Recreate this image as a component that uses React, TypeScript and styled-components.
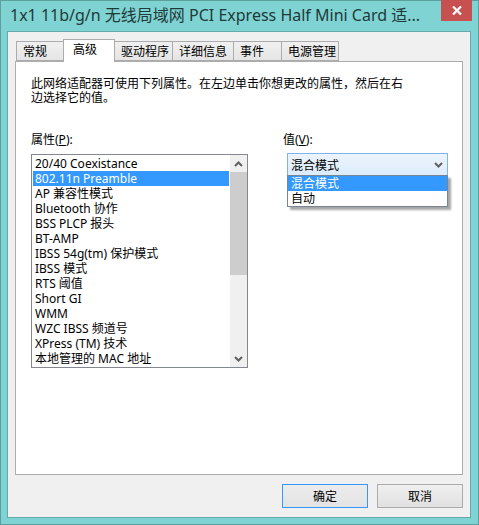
import React from 'react';
import styled, { createGlobalStyle } from 'styled-components';

const GlobalStyle = createGlobalStyle`
  html, body {
    margin: 0;
    padding: 0;
    background: #7fd3d3;
  }
  body {
    font-family: "Noto Sans", "Noto Sans CJK SC", sans-serif;
    font-size: 12px;
    color: #000;
  }
  * {
    box-sizing: border-box;
  }
`;

const Window = styled.div`
  width: 479px;
  height: 525px;
  display: flex;
  flex-direction: column;
  background: #7fd3d3;
  border: 1px solid #5c9f9f;
`;

const TitleBar = styled.div`
  height: 30px;
  display: flex;
  align-items: flex-start;
  padding-left: 9px;
`;

const TitleText = styled.div`
  flex: 1;
  margin-top: 3px;
  font-size: 16px;
  line-height: 22px;
  color: #1f3a3a;
  white-space: nowrap;
  overflow: hidden;
`;

const CloseButton = styled.div`
  width: 31px;
  height: 21px;
  margin-top: -1px;
  margin-right: 6px;
  background: #c75050;
  display: flex;
  align-items: center;
  justify-content: center;
`;

const Client = styled.div`
  flex: 1;
  margin: 0 7px 6px 6px;
  background: #f0f0f0;
  border: 1px solid #65aaaa;
  padding: 7px 7px 9px 7px;
  display: flex;
  flex-direction: column;
`;

const TabStrip = styled.div`
  height: 22px;
  display: flex;
  align-items: flex-end;
  padding-left: 1px;
`;

const Tab = styled.div<{ $w: number; $active?: boolean }>`
  width: ${({ $w }) => $w}px;
  height: ${({ $active }) => ($active ? 23 : 20)}px;
  margin-bottom: ${({ $active }) => ($active ? -1 : 0)}px;
  margin-left: -1px;
  position: relative;
  z-index: ${({ $active }) => ($active ? 2 : 1)};
  border: 1px solid #acacac;
  border-bottom: ${({ $active }) => ($active ? 'none' : '1px solid #acacac')};
  background: ${({ $active }) =>
    $active ? '#ffffff' : 'linear-gradient(#f0f0f0, #e5e5e5)'};
  padding-left: ${({ $active }) => ($active ? 9 : 6)}px;
  line-height: ${({ $active }) => ($active ? 19 : 20)}px;
  white-space: nowrap;
  &:first-child {
    margin-left: 0;
  }
`;

const Panel = styled.div`
  flex: 1;
  background: #fff;
  border: 1px solid #adadad;
  padding: 15px 15px 0 15px;
  display: flex;
  flex-direction: column;
`;

const Description = styled.p`
  margin: 0;
  line-height: 14px;
`;

const Fields = styled.div`
  margin-top: 28px;
  display: grid;
  grid-template-columns: 217px 165px;
  column-gap: 35px;
`;

const Field = styled.div`
  display: flex;
  flex-direction: column;
`;

const FieldLabel = styled.div`
  line-height: 14px;
  height: 14px;
  u {
    text-decoration: underline;
  }
`;

const ListBox = styled.div`
  margin-top: 7px;
  height: 214px;
  border: 1px solid #828790;
  display: flex;
`;

const Items = styled.div`
  flex: 1;
  padding: 1px;
`;

const Item = styled.div<{ $selected?: boolean }>`
  height: 15px;
  line-height: 15px;
  padding-left: 2px;
  white-space: nowrap;
  background: ${({ $selected }) => ($selected ? '#3399ff' : 'transparent')};
  color: ${({ $selected }) => ($selected ? '#fff' : '#000')};
`;

const ScrollBar = styled.div`
  width: 17px;
  display: flex;
  flex-direction: column;
  background: #f0f0f0;
`;

const ScrollArrow = styled.div`
  height: 17px;
  display: flex;
  align-items: center;
  justify-content: center;
`;

const ScrollThumb = styled.div`
  height: 103px;
  background: #cdcdcd;
`;

const ScrollTrack = styled.div`
  flex: 1;
`;

const Combo = styled.div`
  position: relative;
  margin-top: 6px;
  margin-left: 4px;
  width: 161px;
  height: 23px;
  border: 1px solid #7eb4ea;
  background: linear-gradient(#ecf4fc, #dcecfc);
  display: flex;
  align-items: center;
  justify-content: space-between;
  padding: 0 4px 0 3px;
`;

const DropList = styled.div`
  position: absolute;
  left: -1px;
  right: -1px;
  top: 100%;
  background: #fff;
  border: 1px solid #7a8594;
  box-shadow: 3px 3px 2px rgba(0, 0, 0, 0.35);
  z-index: 5;
`;

const DropItem = styled.div<{ $selected?: boolean }>`
  height: 15px;
  line-height: 15px;
  padding-left: 3px;
  background: ${({ $selected }) => ($selected ? '#3399ff' : '#fff')};
  color: ${({ $selected }) => ($selected ? '#fff' : '#000')};
`;

const ButtonRow = styled.div`
  margin-top: 9px;
  display: flex;
  justify-content: flex-end;
  gap: 9px;
`;

const Button = styled.div<{ $default?: boolean }>`
  width: 86px;
  height: 24px;
  border: 1px solid ${({ $default }) => ($default ? '#3399ff' : '#acacac')};
  background: ${({ $default }) =>
    $default ? 'linear-gradient(#ececec, #e3e3e3)' : 'linear-gradient(#efefef, #e1e1e1)'};
  display: flex;
  align-items: center;
  justify-content: center;
`;

const Chevron = ({ up }: { up?: boolean }) => (
  <svg width="9" height="6" viewBox="0 0 9 6">
    <path
      d={up ? 'M1 5 L4.5 1.5 L8 5' : 'M1 1 L4.5 4.5 L8 1'}
      fill="none"
      stroke="#606060"
      strokeWidth="2"
    />
  </svg>
);

const properties = [
  '20/40 Coexistance',
  '802.11n Preamble',
  'AP 兼容性模式',
  'Bluetooth 协作',
  'BSS PLCP 报头',
  'BT-AMP',
  'IBSS 54g(tm) 保护模式',
  'IBSS 模式',
  'RTS 阈值',
  'Short GI',
  'WMM',
  'WZC IBSS 频道号',
  'XPress (TM) 技术',
  '本地管理的 MAC 地址',
];

const tabs = [
  { label: '常规', w: 48 },
  { label: '高级', w: 52, active: true },
  { label: '驱动程序', w: 59 },
  { label: '详细信息', w: 62 },
  { label: '事件', w: 49 },
  { label: '电源管理', w: 58 },
];

export default function App() {
  return (
    <>
      <GlobalStyle />
      <Window>
        <TitleBar>
          <TitleText>1x1 11b/g/n 无线局域网 PCI Express Half Mini Card 适...</TitleText>
          <CloseButton>
            <svg width="10" height="9" viewBox="0 0 10 9">
              <path d="M1 0.5 L9 8.5 M9 0.5 L1 8.5" stroke="#fff" strokeWidth="2.2" />
            </svg>
          </CloseButton>
        </TitleBar>
        <Client>
          <TabStrip>
            {tabs.map((t) => (
              <Tab key={t.label} $w={t.w} $active={t.active}>
                {t.label}
              </Tab>
            ))}
          </TabStrip>
          <Panel>
            <Description>
              此网络适配器可使用下列属性。在左边单击你想更改的属性，然后在右
              <br />
              边选择它的值。
            </Description>
            <Fields>
              <Field>
                <FieldLabel>
                  属性(<u>P</u>):
                </FieldLabel>
                <ListBox>
                  <Items>
                    {properties.map((p, i) => (
                      <Item key={p} $selected={i === 1}>
                        {p}
                      </Item>
                    ))}
                  </Items>
                  <ScrollBar>
                    <ScrollArrow>
                      <Chevron up />
                    </ScrollArrow>
                    <ScrollThumb />
                    <ScrollTrack />
                    <ScrollArrow>
                      <Chevron />
                    </ScrollArrow>
                  </ScrollBar>
                </ListBox>
              </Field>
              <Field>
                <FieldLabel>
                  值(<u>V</u>):
                </FieldLabel>
                <Combo>
                  <span>混合模式</span>
                  <Chevron />
                  <DropList>
                    <DropItem $selected>混合模式</DropItem>
                    <DropItem>自动</DropItem>
                  </DropList>
                </Combo>
              </Field>
            </Fields>
          </Panel>
          <ButtonRow>
            <Button $default>确定</Button>
            <Button>取消</Button>
          </ButtonRow>
        </Client>
      </Window>
    </>
  );
}
